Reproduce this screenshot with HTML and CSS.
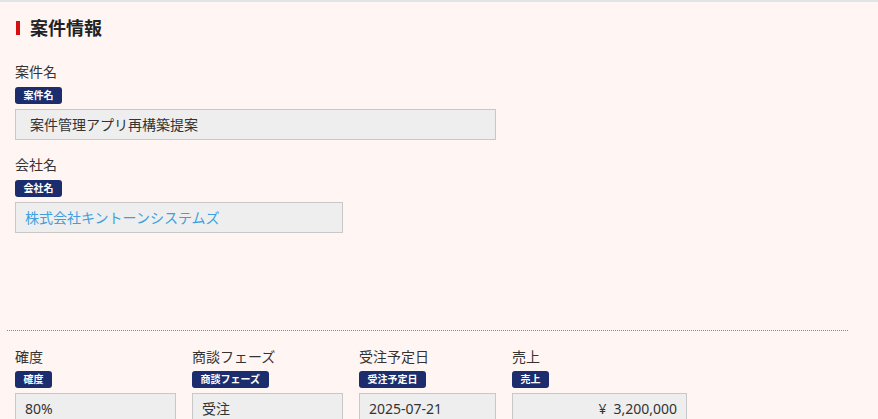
FILE: index.html
```html
<!DOCTYPE html>
<html lang="ja">
<head>
<meta charset="utf-8">
<link rel="stylesheet" href="styles.css">
</head>
<body>
<div class="page">
  <section class="block block-top">
    <h2 class="heading"><span class="heading-bar"></span>案件情報</h2>
    <div class="field">
      <div class="label">案件名</div>
      <span class="badge">案件名</span>
      <div class="input input-name input-indent">案件管理アプリ再構築提案</div>
    </div>
    <div class="field">
      <div class="label">会社名</div>
      <span class="badge">会社名</span>
      <div class="input input-company link">株式会社キントーンシステムズ</div>
    </div>
  </section>
  <hr class="divider">
  <section class="block row">
    <div class="field">
      <div class="label">確度</div>
      <span class="badge">確度</span>
      <div class="input w-kakudo">80%</div>
    </div>
    <div class="field">
      <div class="label">商談フェーズ</div>
      <span class="badge">商談フェーズ</span>
      <div class="input w-phase">受注</div>
    </div>
    <div class="field">
      <div class="label">受注予定日</div>
      <span class="badge">受注予定日</span>
      <div class="input w-date">2025-07-21</div>
    </div>
    <div class="field">
      <div class="label">売上</div>
      <span class="badge">売上</span>
      <div class="input w-sales right">¥&ensp;3,200,000</div>
    </div>
  </section>
</div>
</body>
</html>
```
FILE: styles.css
```css
html, body {
  margin: 0;
  padding: 0;
  background: #fff6f4;
}
body {
  font-family: "Noto Sans", "Noto Sans CJK JP", sans-serif;
  color: #333333;
  font-size: 14px;
}
.page {
  border-top: 2px solid #e1e4e7;
  height: 417px;
  overflow: hidden;
}
.block {
  padding: 0 15px;
}
.block-top {
  padding-top: 14px;
  padding-bottom: 97px;
}
.heading {
  display: flex;
  align-items: center;
  gap: 10px;
  margin: 0 0 22px 1px;
  font-size: 18px;
  font-weight: bold;
  line-height: 24px;
  color: #222222;
}
.heading-bar {
  width: 4px;
  height: 14px;
  background: #d40f0f;
}
.field {
  display: flex;
  flex-direction: column;
  align-items: flex-start;
}
.field + .field {
  margin-top: 15px;
}
.label {
  line-height: 20px;
  height: 20px;
  margin-bottom: 5px;
}
.badge {
  display: inline-block;
  background: #1b2d6d;
  color: #ffffff;
  font-size: 10px;
  font-weight: bold;
  line-height: 17px;
  height: 17px;
  padding: 0 8.5px;
  border-radius: 3px;
  margin-bottom: 5px;
}
.input {
  box-sizing: border-box;
  height: 31px;
  line-height: 29px;
  background: #eeeeee;
  border: 1px solid #c8c8c8;
  padding: 0 9px;
  white-space: nowrap;
}
.input-indent { padding-left: 14px; }
.input-name { width: 481px; }
.input-company { width: 328px; }
.link { color: #3d9ee0; }
.divider {
  margin: 0 30px 0 7px;
  border: 0;
  border-top: 1px dotted #888888;
  height: 0;
}
.row {
  display: flex;
  gap: 16px;
  padding-top: 16px;
}
.row .field + .field { margin-top: 0; }
.row .label { margin-bottom: 4px; }
.w-kakudo { width: 161px; }
.w-phase { width: 151px; }
.w-date { width: 137px; }
.w-sales { width: 175px; }
.right { text-align: right; }
```
